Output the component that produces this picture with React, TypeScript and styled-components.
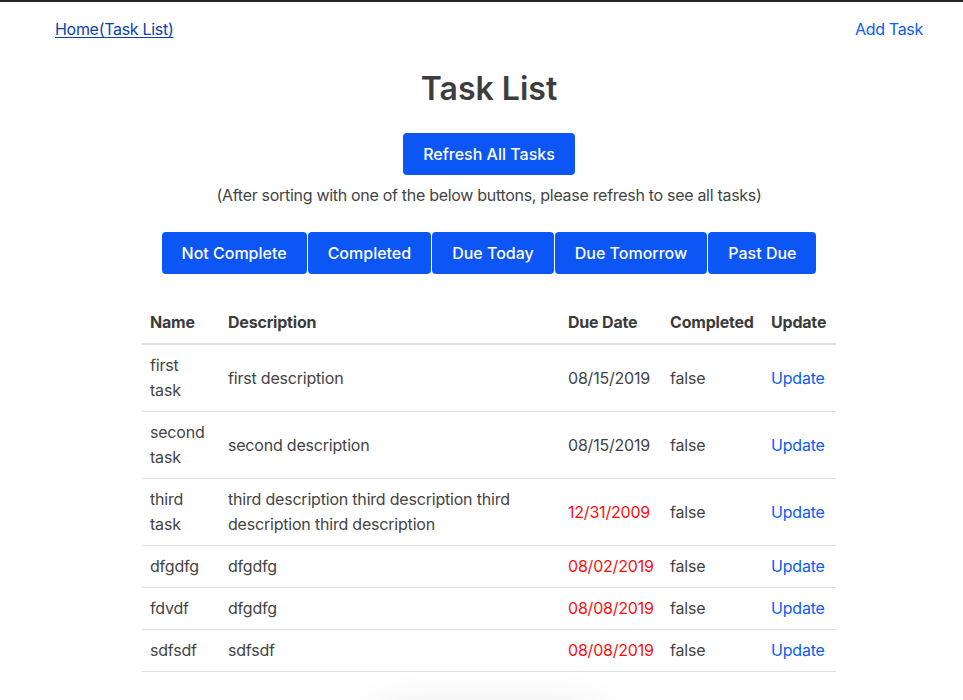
import React from "react";
import styled, { createGlobalStyle } from "styled-components";

const Global = createGlobalStyle`
  html, body { margin: 0; padding: 0; background: #fff; }
  body {
    font-family: Inter, "Noto Sans", Roboto, sans-serif;
    font-size: 16px;
    color: #444;
    border-top: 2px solid #252525;
  }
  * { box-sizing: border-box; }
`;

const Page = styled.div`
  padding: 0 40px 0 55px;
  display: flex;
  flex-direction: column;
  align-items: center;
`;

const Nav = styled.nav`
  width: 100%;
  display: flex;
  justify-content: space-between;
  margin-top: 15px;
  line-height: 24px;
  letter-spacing: -0.3px;
`;

const HomeLink = styled.a`
  color: #0b3fb0;
  text-decoration: underline;
  text-underline-offset: 2px;
`;

const NavLink = styled.a`
  color: #0d5cf6;
  text-decoration: none;
`;

const Title = styled.h1`
  margin: 29px 0 0;
  font-size: 32px;
  line-height: 38px;
  font-weight: 600;
  color: #3d3d3d;
`;

const Button = styled.button`
  background: #0c56f6;
  color: #fff;
  border: none;
  border-radius: 4px;
  font-family: inherit;
  font-size: 16px;
  font-weight: 500;
  line-height: 24px;
  padding: 9px 20px;
  cursor: pointer;
`;

const RefreshButton = styled(Button)`
  margin-top: 25px;
  padding: 9px 20px;
`;

const Note = styled.p`
  margin: 8px 0 0;
  line-height: 24px;
  color: #444;
  letter-spacing: -0.3px;
`;

const SortRow = styled.div`
  margin-top: 25px;
  display: flex;
  gap: 1px;
`;

const Table = styled.table`
  margin-top: 28px;
  width: 694px;
  border-collapse: collapse;
  table-layout: fixed;
`;

const Th = styled.th<{ $w: number }>`
  width: ${(p) => p.$w}px;
  text-align: left;
  font-weight: 700;
  color: #3b3b3b;
  padding: 8px;
  line-height: 25px;
  letter-spacing: -0.2px;
  border-bottom: 2px solid #dedede;
`;

const Td = styled.td<{ $late?: boolean }>`
  padding: 8px;
  line-height: 25px;
  vertical-align: middle;
  letter-spacing: -0.2px;
  color: ${(p) => (p.$late ? "#fa0f0f" : "#444")};
  border-bottom: 1px solid #dedede;
`;

const UpdateLink = styled.a`
  color: #0d5cf6;
  text-decoration: none;
`;

const Shadow = styled.div`
  margin-top: 48px;
  width: 230px;
  height: 60px;
  border-radius: 30px;
  box-shadow: 0 0 40px 12px rgba(0, 0, 0, 0.1);
`;

const tasks = [
  { name: "first task", desc: "first description", due: "08/15/2019", late: false },
  { name: "second task", desc: "second description", due: "08/15/2019", late: false },
  {
    name: "third task",
    desc: "third description third description third description third description",
    due: "12/31/2009",
    late: true,
  },
  { name: "dfgdfg", desc: "dfgdfg", due: "08/02/2019", late: true },
  { name: "fdvdf", desc: "dfgdfg", due: "08/08/2019", late: true },
  { name: "sdfsdf", desc: "sdfsdf", due: "08/08/2019", late: true },
];

export default function App() {
  return (
    <>
      <Global />
      <Page>
        <Nav>
          <HomeLink href="#">Home(Task List)</HomeLink>
          <NavLink href="#">Add Task</NavLink>
        </Nav>
        <Title>Task List</Title>
        <RefreshButton>Refresh All Tasks</RefreshButton>
        <Note>(After sorting with one of the below buttons, please refresh to see all tasks)</Note>
        <SortRow>
          <Button>Not Complete</Button>
          <Button>Completed</Button>
          <Button>Due Today</Button>
          <Button>Due Tomorrow</Button>
          <Button>Past Due</Button>
        </SortRow>
        <Table>
          <thead>
            <tr>
              <Th $w={78}>Name</Th>
              <Th $w={340}>Description</Th>
              <Th $w={102}>Due Date</Th>
              <Th $w={101}>Completed</Th>
              <Th $w={73}>Update</Th>
            </tr>
          </thead>
          <tbody>
            {tasks.map((t, i) => (
              <tr key={i}>
                <Td>{t.name}</Td>
                <Td>{t.desc}</Td>
                <Td $late={t.late}>{t.due}</Td>
                <Td>false</Td>
                <Td>
                  <UpdateLink href="#">Update</UpdateLink>
                </Td>
              </tr>
            ))}
          </tbody>
        </Table>
        <Shadow />
      </Page>
    </>
  );
}
